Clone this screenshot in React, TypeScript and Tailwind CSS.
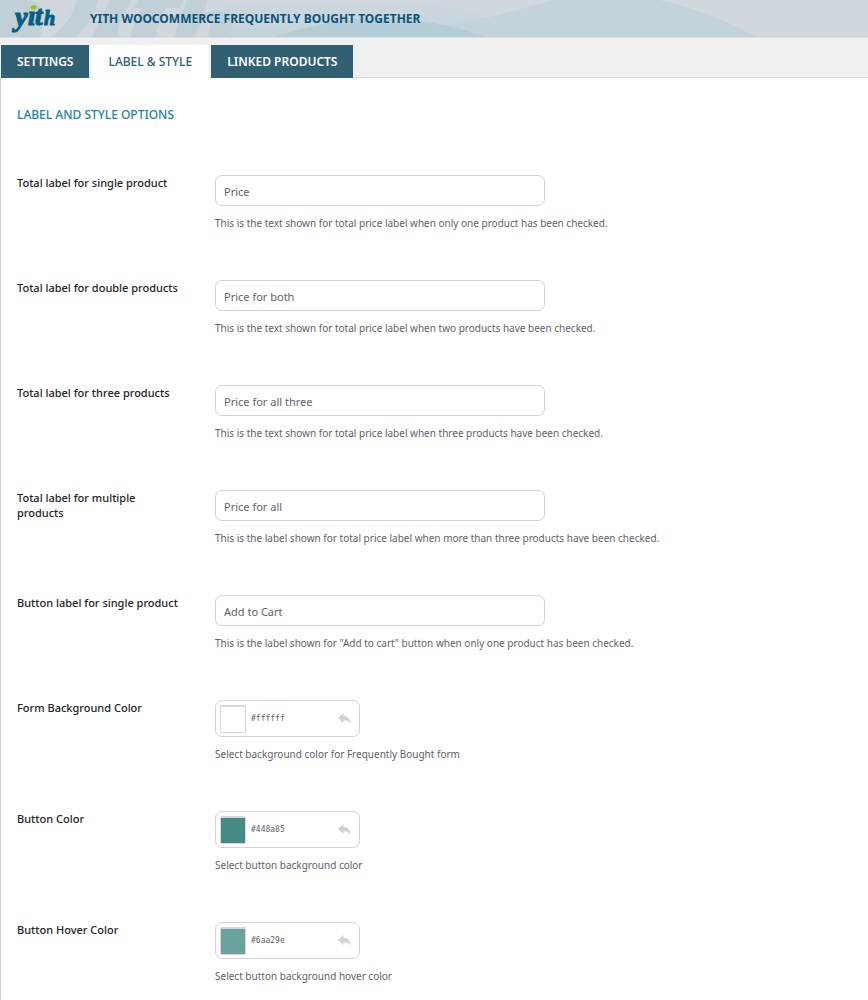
import { useId, useState } from "react";

type Option = { label: string; value: string; help: string };

const tabs = ["SETTINGS", "LABEL & STYLE", "LINKED PRODUCTS"];

const textOptions: Option[] = [
  {
    label: "Total label for single product",
    value: "Price",
    help: "This is the text shown for total price label when only one product has been checked.",
  },
  {
    label: "Total label for double products",
    value: "Price for both",
    help: "This is the text shown for total price label when two products have been checked.",
  },
  {
    label: "Total label for three products",
    value: "Price for all three",
    help: "This is the text shown for total price label when three products have been checked.",
  },
  {
    label: "Total label for multiple products",
    value: "Price for all",
    help: "This is the label shown for total price label when more than three products have been checked.",
  },
  {
    label: "Button label for single product",
    value: "Add to Cart",
    help: 'This is the label shown for "Add to cart" button when only one product has been checked.',
  },
];

const colorOptions: Option[] = [
  {
    label: "Form Background Color",
    value: "#ffffff",
    help: "Select background color for Frequently Bought form",
  },
  { label: "Button Color", value: "#448a85", help: "Select button background color" },
  { label: "Button Hover Color", value: "#6aa29e", help: "Select button background hover color" },
];

function Logo() {
  return (
    <svg
      width="58"
      height="37"
      viewBox="0 0 58 37"
      className="shrink-0"
      role="img"
      aria-label="yith"
    >
      <g
        fill="#06607f"
        stroke="#06607f"
        strokeWidth="1.2"
        strokeLinejoin="round"
        fontFamily="'Liberation Serif', serif"
        fontWeight="700"
        fontStyle="italic"
      >
        <text x="15" y="26" fontSize="28">
          y
        </text>
        <text x="28" y="25" fontSize="27">
          ı
        </text>
        <text x="35" y="25" fontSize="27">
          t
        </text>
        <text x="44" y="25" fontSize="20">
          h
        </text>
      </g>
      <ellipse cx="33.5" cy="7.5" rx="3" ry="2.2" fill="#97c11f" transform="rotate(-12 33.5 7.5)" />
    </svg>
  );
}

function HeaderArt() {
  return (
    <svg
      className="absolute inset-0 h-full w-full"
      viewBox="0 0 868 37"
      preserveAspectRatio="xMinYMin slice"
      aria-hidden="true"
    >
      <defs>
        <linearGradient id="fade" x1="0" x2="0" y1="0" y2="1">
          <stop offset="0" stopColor="#cfd8de" />
          <stop offset="1" stopColor="#c3d3da" />
        </linearGradient>
      </defs>
      <path d="M220 0H430C470 10 500 24 540 37H220Z" fill="url(#fade)" />
      <path d="M340 37C440 32 490 17 555 0H660C700 9 730 23 757 37Z" fill="#c3d3da" />
      <path d="M275 37C350 10 420 14 486 37Z" fill="#aecad5" opacity="0.7" />
      <g fill="#c1d0d7">
        <path d="M0 0H26C44 2 46 14 40 37H0Z" />
        <path d="M76 0H98C96 14 86 28 76 37H50C64 28 74 16 76 0Z" />
        <path d="M110 0H131L119 25C117 30 118 34 120 37H92Z" />
        <path d="M138 0H183L180 8H166L157 28C156 32 157 35 159 37H131C131 32 134 24 141 8H134Z" />
        <path d="M187 0H208L203 14C216 8 226 10 231 18C234 25 230 31 232 37H209C207 30 214 22 209 19C202 20 197 29 194 37H174Z" />
      </g>
    </svg>
  );
}

function Row({
  id,
  label,
  help,
  tall,
  children,
}: {
  id: string;
  label: string;
  help: string;
  tall?: boolean;
  children: React.ReactNode;
}) {
  return (
    <div className={tall ? "flex min-h-[111px]" : "flex min-h-[105px]"}>
      <div className="w-[198px] shrink-0 pr-[34px]">
        <label htmlFor={id} className="block text-[11px] leading-[15px] font-medium text-[#1d2327]">
          {label}
        </label>
      </div>
      <div className="min-w-0 flex-1">
        {children}
        <p className="mt-[10px] text-[10px] leading-[15px] text-[#646068]">{help}</p>
      </div>
    </div>
  );
}

function TextRow({ option }: { option: Option }) {
  const id = useId();
  return (
    <Row id={id} label={option.label} help={option.help}>
      <input
        id={id}
        type="text"
        defaultValue={option.value}
        className="block h-[31px] w-full max-w-[330px] rounded-[7px] border border-[#d3d3d3] bg-white px-2 pt-[2px] text-[11px] text-[#646068]"
      />
    </Row>
  );
}

function ColorRow({ option }: { option: Option }) {
  const id = useId();
  const [color, setColor] = useState(option.value);
  return (
    <Row id={id} label={option.label} help={option.help} tall>
      <div className="flex h-[37px] w-[145px] items-center rounded-[7px] border border-[#d3d3d3] bg-white pr-2 pl-1">
        <span
          className="h-[28px] w-[26px] shrink-0 rounded-[2px] border border-t-2 border-[#d6d9d8]"
          style={{ backgroundColor: color }}
        />
        <input
          id={id}
          type="text"
          value={color}
          onChange={(event) => setColor(event.target.value)}
          className="ml-[5px] w-0 min-w-0 flex-1 bg-transparent pt-px font-['DejaVu_Sans_Mono',monospace] text-[8px] text-[#646068]"
        />
        <button type="button" aria-label="Reset color" onClick={() => setColor(option.value)}>
          <svg width="13" height="11" viewBox="0 0 13 11" fill="#d3d3d3" aria-hidden="true">
            <path d="M5.5 0V2.8C9.5 3 12 5.5 13 10.5C10.8 8 8.5 7.3 5.5 7.3V10L0 5Z" />
          </svg>
        </button>
      </div>
    </Row>
  );
}

export default function App() {
  return (
    <div className="min-h-screen bg-white font-['Noto_Sans','Open_Sans',sans-serif]">
      <header className="relative flex h-[38px] items-center overflow-hidden border-b border-[#dbe1e4] bg-[#d0d8de]">
        <HeaderArt />
        <div className="relative flex items-center">
          <Logo />
          <h1 className="pt-px pl-8 text-[12px] font-bold text-[#0b5478]">
            YITH WOOCOMMERCE FREQUENTLY BOUGHT TOGETHER
          </h1>
        </div>
      </header>

      <nav className="flex h-10 items-end gap-[2px] border-b border-[#d9d9d9] bg-[#f0f0f0] pl-px">
        {tabs.map((tab, index) => (
          <a
            key={tab}
            href="#"
            aria-current={index === 1 ? "page" : undefined}
            className={
              index === 1
                ? "-mb-px flex h-[33px] items-center bg-white px-[17px] text-[12px] font-medium text-[#316072]"
                : "-mb-px flex h-[33px] items-center bg-[#316072] px-4 text-[12px] font-semibold text-white"
            }
          >
            {tab}
          </a>
        ))}
      </nav>

      <main className="border-l border-[#d3d3d3] px-4 pt-7">
        <h2 className="text-[12px] leading-[18px] font-medium text-[#2482a8]">
          LABEL AND STYLE OPTIONS
        </h2>
        <form className="pt-[51px]">
          {textOptions.map((option) => (
            <TextRow key={option.label} option={option} />
          ))}
          {colorOptions.map((option) => (
            <ColorRow key={option.label} option={option} />
          ))}
        </form>
      </main>
    </div>
  );
}
